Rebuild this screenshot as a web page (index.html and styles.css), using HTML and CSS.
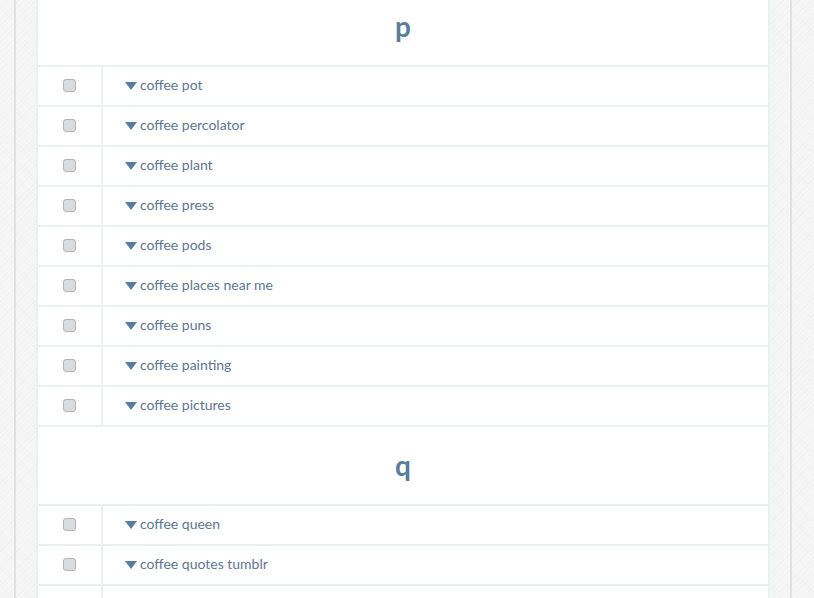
FILE: index.html
```html
<!DOCTYPE html>
<html lang="en">
  <head>
    <meta charset="UTF-8" />
    <title>Coffee keywords</title>
    <link rel="stylesheet" href="styles.css">
  </head>
  <body>
    <div class="page">
      <table class="keywords">
        <tbody>
          <tr class="letter"><th colspan="2">p</th></tr>
          <tr><td class="check"><input type="checkbox" /></td><td><span class="caret"></span>coffee pot</td></tr>
          <tr><td class="check"><input type="checkbox" /></td><td><span class="caret"></span>coffee percolator</td></tr>
          <tr><td class="check"><input type="checkbox" /></td><td><span class="caret"></span>coffee plant</td></tr>
          <tr><td class="check"><input type="checkbox" /></td><td><span class="caret"></span>coffee press</td></tr>
          <tr><td class="check"><input type="checkbox" /></td><td><span class="caret"></span>coffee pods</td></tr>
          <tr><td class="check"><input type="checkbox" /></td><td><span class="caret"></span>coffee places near me</td></tr>
          <tr><td class="check"><input type="checkbox" /></td><td><span class="caret"></span>coffee puns</td></tr>
          <tr><td class="check"><input type="checkbox" /></td><td><span class="caret"></span>coffee painting</td></tr>
          <tr><td class="check"><input type="checkbox" /></td><td><span class="caret"></span>coffee pictures</td></tr>
          <tr class="letter"><th colspan="2">q</th></tr>
          <tr><td class="check"><input type="checkbox" /></td><td><span class="caret"></span>coffee queen</td></tr>
          <tr><td class="check"><input type="checkbox" /></td><td><span class="caret"></span>coffee quotes tumblr</td></tr>
          <tr><td class="check"></td><td></td></tr>
        </tbody>
      </table>
    </div>
  </body>
</html>
```

FILE: styles.css
```css
* {
  box-sizing: border-box;
}

html, body {
  margin: 0;
  padding: 0;
}

body {
  background-color: #f6f6f6;
  background-image:
    repeating-linear-gradient(45deg, rgba(0,0,0,0.012) 0 1px, transparent 1px 3px),
    repeating-linear-gradient(-45deg, rgba(0,0,0,0.012) 0 1px, transparent 1px 4px);
  font-family: Lato, "Open Sans", sans-serif;
  height: 598px;
  overflow: hidden;
}

.page {
  margin-left: 14px;
  width: 778px;
  min-height: 100vh;
  border-left: 2px solid #dce2e5;
  border-right: 2px solid #dce2e5;
  padding: 0 20px;
}

.keywords {
  width: 734px;
  margin-top: -14px;
  border-collapse: collapse;
  background: #ffffff;
  border: 2px solid #ecf0f1;
}

.keywords td,
.keywords th {
  border: 2px solid #ecf0f1;
  padding: 0;
}

.keywords td {
  height: 40px;
  font-size: 14px;
  color: #5d7690;
  padding-left: 22px;
  padding-bottom: 3px;
}

.keywords td.check {
  width: 65px;
  padding: 0;
  text-align: center;
}

.letter th {
  height: 79px;
  font-size: 28px;
  font-weight: bold;
  color: #5a7d9b;
  text-align: center;
  padding-bottom: 2px;
}

.check input {
  -webkit-appearance: none;
  appearance: none;
  display: block;
  width: 13px;
  height: 13px;
  margin: -2px auto 0;
  border: 1px solid #c6aea8;
  border-radius: 3px;
  background: #d6dde1;
}

.caret {
  display: inline-block;
  width: 0;
  height: 0;
  border-left: 6px solid transparent;
  border-right: 6px solid transparent;
  border-top: 8px solid #577c9c;
  margin-right: 3px;
  vertical-align: 0;
}
```
